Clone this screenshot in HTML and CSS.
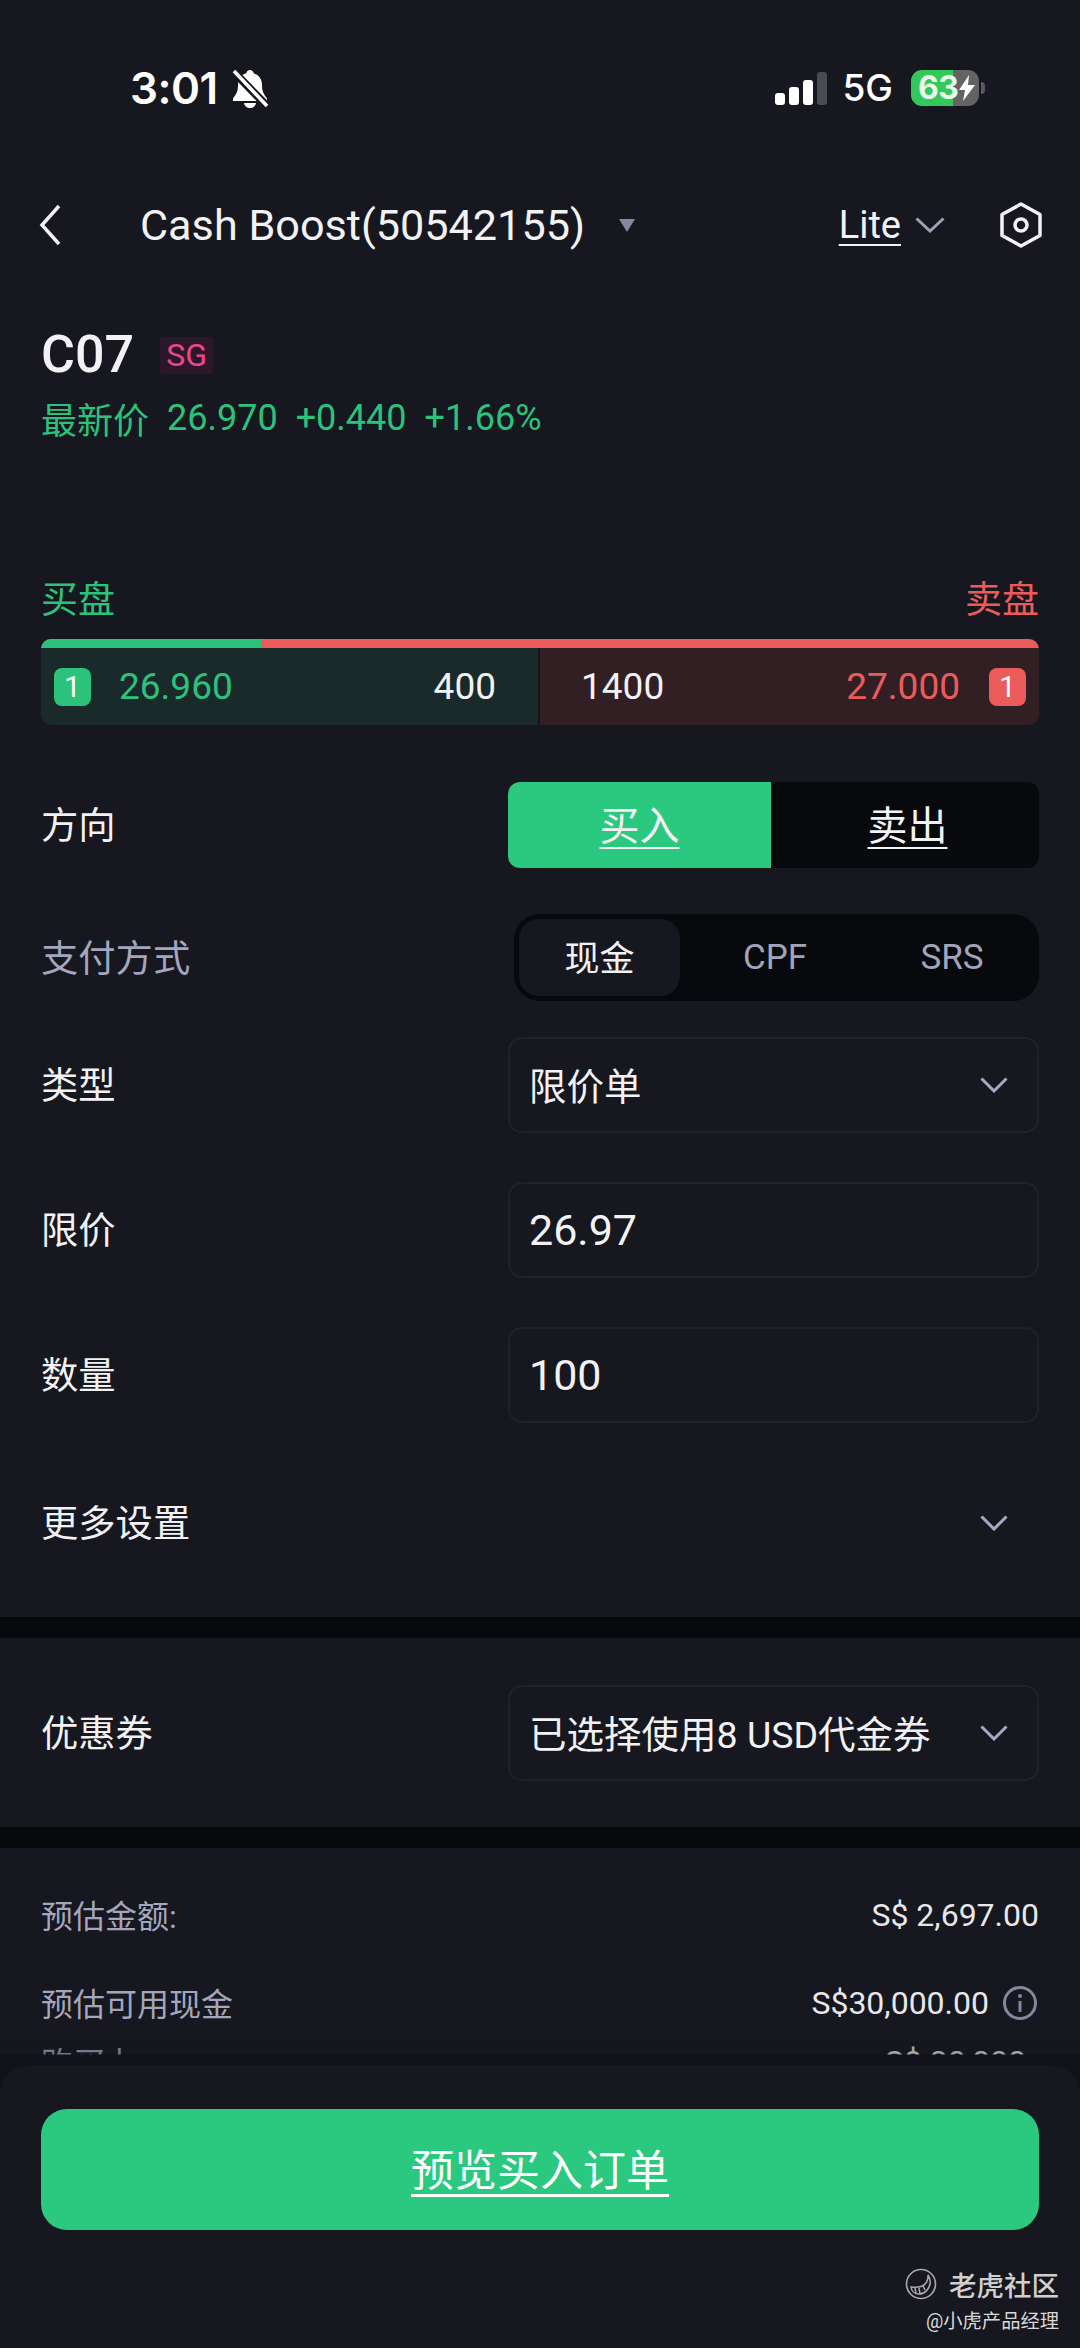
FILE: index.html
```html
<!DOCTYPE html>
<html lang="zh-CN">
<head>
  <meta charset="utf-8">
  <title>Cash Boost</title>
  <link rel="stylesheet" href="styles.css">
</head>
<body>
<div class="page">

  <div class="status">
    <div class="status-left">
      <span class="time">3:01</span>
      <svg class="bell" width="38" height="40" viewBox="0 0 38 40">
        <path d="M19 1c2 0 3.500 1.500 3.700 3.300C28.500 6 31 10.500 31 16c0 6 1.500 9 5 13.500V32H2v-2.500C5.500 25 7 22 7 16c0-5.500 2.500-10 8.300-11.700C15.500 2.500 17 1 19 1z" fill="#fff"/>
        <path d="M13 34h12c-.5 3-3 5-6 5s-5.500-2-6-5z" fill="#fff"/>
        <path d="M1 1l36 37" stroke="#16171f" stroke-width="8"/>
        <path d="M3 2l33 35" stroke="#fff" stroke-width="3.600"/>
      </svg>
    </div>
    <div class="status-right">
      <div class="signal"><i class="b1"></i><i class="b2"></i><i class="b3"></i><i class="b4"></i></div>
      <span class="net">5G</span>
      <div class="battery">
        <span class="batt-num">63</span>
        <svg class="bolt" width="16" height="26" viewBox="0 0 16 26"><path d="M10 0L0 15h6l-2 11L16 10H9z" fill="#fff"/></svg>
      </div>
      <i class="batt-tip"></i>
    </div>
  </div>

  <div class="nav">
    <svg class="back" width="22" height="44" viewBox="0 0 22 44"><path d="M20 3L3 22l17 19" fill="none" stroke="#f2f2f4" stroke-width="3.500"/></svg>
    <span class="nav-title">Cash Boost(50542155)</span>
    <i class="caret"></i>
    <span class="lite">Lite</span>
    <svg class="lite-chev" width="30" height="16" viewBox="0 0 30 16"><path d="M1.500 1.500L15 14 28.500 1.500" fill="none" stroke="#9ea1b8" stroke-width="3"/></svg>
    <svg class="gear" width="44" height="46" viewBox="0 0 44 46">
      <path d="M22 2l19 10.500v21L22 44 3 33.500v-21z" fill="none" stroke="#f2f2f4" stroke-width="3.500" stroke-linejoin="round"/>
      <circle cx="22" cy="23" r="6" fill="none" stroke="#f2f2f4" stroke-width="3.500"/>
    </svg>
  </div>

  <div class="quote">
    <div class="symbol">
      <span class="ticker">C07</span>
      <span class="market">SG</span>
    </div>
    <div class="last">
      <span>最新价</span><span>26.970</span><span>+0.440</span><span>+1.66%</span>
    </div>
  </div>

  <div class="section">
    <div class="depth-head">
      <span class="up">买盘</span>
      <span class="down">卖盘</span>
    </div>
    <div class="depth">
      <div class="depth-ratio"><i></i></div>
      <div class="depth-rows">
        <div class="depth-bid">
          <span class="lvl lvl-up">1</span>
          <span class="up depth-price">26.960</span>
          <span class="depth-qty">400</span>
        </div>
        <div class="depth-ask">
          <span class="depth-qty">1400</span>
          <span class="down depth-price">27.000</span>
          <span class="lvl lvl-down">1</span>
        </div>
      </div>
    </div>

    <div class="row row-dir">
      <span class="label">方向</span>
      <div class="side">
        <span class="side-buy">买入</span>
        <span class="side-sell">卖出</span>
      </div>
    </div>

    <div class="row row-pay">
      <span class="label label-dim">支付方式</span>
      <div class="pay">
        <span class="pay-on">现金</span>
        <span class="pay-cpf">CPF</span>
        <span class="pay-srs">SRS</span>
      </div>
    </div>

    <div class="row row-field row-type">
      <span class="label">类型</span>
      <div class="field">
        <span class="field-text">限价单</span>
        <svg class="chev" width="28" height="16" viewBox="0 0 28 16"><path d="M1.500 1.500L14 14 26.500 1.500" fill="none" stroke="#a5a9c2" stroke-width="3"/></svg>
      </div>
    </div>

    <div class="row row-field">
      <span class="label">限价</span>
      <div class="field"><span class="field-num">26.97</span></div>
    </div>

    <div class="row row-field">
      <span class="label">数量</span>
      <div class="field"><span class="field-num">100</span></div>
    </div>

    <div class="row row-more">
      <span class="label">更多设置</span>
      <svg class="chev" width="28" height="16" viewBox="0 0 28 16"><path d="M1.500 1.500L14 14 26.500 1.500" fill="none" stroke="#a5a9c2" stroke-width="3"/></svg>
    </div>
  </div>

  <div class="gap"></div>

  <div class="section section-coupon">
    <div class="row row-coupon">
      <span class="label">优惠券</span>
      <div class="field">
        <span class="field-text">已选择使用8 USD代金券</span>
        <svg class="chev" width="28" height="16" viewBox="0 0 28 16"><path d="M1.500 1.500L14 14 26.500 1.500" fill="none" stroke="#a5a9c2" stroke-width="3"/></svg>
      </div>
    </div>
  </div>

  <div class="gap"></div>

  <div class="section summary">
    <div class="sum-row">
      <span class="sum-label">预估金额:</span>
      <span class="sum-val">S$ 2,697.00</span>
    </div>
    <div class="sum-row sum-cash">
      <span class="sum-label">预估可用现金</span>
      <span class="sum-val">S$30,000.00
        <svg class="info" width="34" height="34" viewBox="0 0 34 34">
          <circle cx="17" cy="17" r="15.500" fill="none" stroke="#8387a0" stroke-width="3"/>
          <circle cx="17" cy="10" r="2" fill="#8387a0"/>
          <path d="M17 15v11" stroke="#8387a0" stroke-width="3"/>
        </svg>
      </span>
    </div>
    <div class="sum-row sum-power">
      <span class="sum-label">购买力</span>
      <span class="sum-val">S$ 30,000</span>
    </div>
  </div>

  <div class="sheet-fade"></div>
  <div class="sheet">
    <div class="submit"><span>预览买入订单</span></div>
  </div>

  <div class="mark">
    <div class="mark-top">
      <svg width="32" height="32" viewBox="0 0 32 32">
        <circle cx="16" cy="16" r="14.500" fill="none" stroke="#a8a8a8" stroke-width="1.600"/>
        <path d="M23 7c.5 5-2 10-7 11.500-3 .9-6 1-10 .5 .5 4 3.500 7 8 7 6 0 10-5 11-10 .5-3 0-6-2-9z" fill="none" stroke="#a8a8a8" stroke-width="1.600"/>
        <path d="M10 20l1 5M14 20l1 6M18 18l2 4" stroke="#a8a8a8" stroke-width="1.600"/>
      </svg>
      <span>老虎社区</span>
    </div>
    <div class="mark-user">@小虎产品经理</div>
  </div>

</div>
</body>
</html>
```

FILE: styles.css
```css
* { box-sizing: border-box; }

html, body { margin: 0; padding: 0; background: #16171f; }

body {
  font-family: Roboto, "Noto Sans CJK SC", sans-serif;
  color: #f2f2f4;
}

.page {
  position: relative;
  width: 1080px;
  height: 2348px;
  overflow: hidden;
  background: #16171f;
}

/* status bar */
.status { height: 175px; display: flex; justify-content: space-between; padding: 69px 0 0 130px; }
.status-left { display: flex; align-items: flex-start; height: 40px; }
.time { font: 600 44px/38px Inter, sans-serif; color: #fff; letter-spacing: -.5px; }
.bell { margin-left: 13px; }
.status-right { display: flex; align-items: center; height: 38px; padding-right: 95px; }
.signal { display: flex; align-items: flex-end; gap: 4px; height: 33px; margin-right: 15px; }
.signal i { display: block; width: 10px; border-radius: 3px; background: #fff; }
.signal .b1 { height: 12px; }
.signal .b2 { height: 18px; }
.signal .b3 { height: 25px; }
.signal .b4 { height: 33px; background: #4a4b53; }
.net { font: 500 37px/38px Inter, sans-serif; color: #fff; margin-right: 18px; }
.battery {
  position: relative;
  display: flex;
  align-items: center;
  width: 68px;
  height: 36px;
  padding-left: 7px;
  border-radius: 11px;
  background: linear-gradient(90deg, #34c759 0, #34c759 62%, #636366 62%);
}
.batt-num { font: 700 32px/36px Inter, sans-serif; color: #e6f9ea; letter-spacing: -.5px; }
.bolt { margin-left: 1px; }
.batt-tip { display: block; width: 4px; height: 12px; margin-left: 2px; border-radius: 0 4px 4px 0; background: #5a5a60; }

/* top nav */
.nav { height: 100px; display: flex; align-items: center; padding: 0 37px 0 39px; }
.back { flex: none; }
.nav-title { font-size: 43.200px; font-weight: 400; margin-left: 79px; white-space: nowrap; }
.caret {
  width: 0; height: 0; margin-left: 34px;
  border-left: 8px solid transparent;
  border-right: 8px solid transparent;
  border-top: 13px solid #85889f;
}
.lite { font-size: 38px; margin-left: auto; text-decoration: underline; text-underline-offset: 6px; text-decoration-thickness: 2px; }
.lite-chev { margin-left: 14px; }
.gear { margin-left: 54px; }

/* stock quote */
.quote { height: 285px; padding: 56px 41px 0; }
.symbol { display: flex; align-items: center; height: 48px; }
.ticker { font-size: 52px; font-weight: 500; line-height: 48px; }
.market {
  display: flex; align-items: center; justify-content: center;
  width: 53px; height: 37px; margin-left: 26px;
  border-radius: 4px;
  background: #2b1729;
  color: #e8488c;
  font-size: 32px;
}
.last { display: flex; gap: 18px; margin-top: 17px; height: 44px; align-items: center; color: #2bc27c; font-size: 36px; }

.up { color: #2bc27c; }
.down { color: #ec5b5c; }

/* order book strip */
.section { padding: 0 41px; }
.depth-head { display: flex; justify-content: space-between; height: 44px; align-items: center; font-size: 37px; margin-top: 16px; padding-bottom: 3px; }
.depth { margin-top: 19px; height: 86px; border-radius: 10px; overflow: hidden; }
.depth-ratio { height: 9px; background: #ec5b5c; }
.depth-ratio i { display: block; width: 220px; height: 9px; background: #2bc27c; }
.depth-rows { display: flex; height: 77px; font-size: 37px; gap: 2px; background: #13151b; }
.depth-bid, .depth-ask { display: flex; align-items: center; }
.depth-bid { width: 497px; padding: 0 42px 0 13px; background: #1a2a2a; }
.depth-ask { flex: 1; padding: 0 13px 0 41px; background: #321f24; }
.depth-bid .depth-qty { margin-left: auto; }
.depth-ask .depth-price { margin-left: auto; }
.lvl {
  display: flex; align-items: center; justify-content: center;
  width: 37px; height: 38px;
  border-radius: 8px;
  color: #fff;
  font-size: 30px;
}
.lvl-up { background: #2bc27c; margin-right: 28px; }
.lvl-down { background: #ec5b5c; margin-left: 29px; }

/* form rows */
.row { display: flex; align-items: center; justify-content: space-between; }
.label { font-size: 37.300px; white-space: nowrap; padding-bottom: 4px; }
.label-dim { color: #a3a6bd; }

.row-dir { margin-top: 57px; height: 86px; }
.side { display: flex; width: 531px; height: 86px; border-radius: 12px; overflow: hidden; background: #08090c; font-size: 40px; }
.side span { display: flex; align-items: center; justify-content: center; padding-bottom: 4px; text-decoration: underline; text-underline-offset: 7px; text-decoration-thickness: 2px; }
.side-buy { width: 263px; background: #2bc97f; }
.side-sell { flex: 1; padding-left: 5px; }

.row-pay { margin-top: 46px; height: 87px; }
.pay { display: flex; width: 525px; height: 87px; padding: 5px; border-radius: 26px; background: #08090c; color: #a2a5ba; font-size: 35px; }
.pay span { display: flex; align-items: center; justify-content: center; }
.pay .pay-on { width: 161px; padding-bottom: 4px; border-radius: 20px; background: #16171f; color: #f2f2f4; }
.pay .pay-cpf { width: 190px; }
.pay .pay-srs { width: 164px; }

.row-field { margin-top: 49px; height: 96px; }
.row-type { margin-top: 36px; }
.field {
  display: flex; align-items: center; justify-content: space-between;
  width: 531px; height: 96px;
  padding: 0 29px 0 19px;
  border: 2px solid #20212a;
  border-radius: 14px;
}
.field-text { font-size: 37.500px; white-space: nowrap; padding-bottom: 4px; }
.field-num { font-size: 43px; }

.row-more { margin-top: 50px; height: 100px; padding-right: 31px; margin-bottom: 44px; }

.gap { height: 21px; background: #08090c; }

.section-coupon { padding-top: 47px; padding-bottom: 46px; }
.row-coupon { height: 96px; }

/* summary */
.summary { padding-top: 42px; }
.sum-row { display: flex; align-items: center; justify-content: space-between; height: 50px; font-size: 32px; }
.sum-label { color: #a3a6bd; padding-bottom: 3px; }
.sum-val { display: flex; align-items: center; color: #e8e8ec; }
.sum-cash { margin-top: 38px; }
.sum-power { margin-top: 9px; padding-right: 13px; }
.info { margin-left: 14px; margin-right: 2px; }

/* fixed bottom sheet */
.sheet-fade {
  position: absolute;
  left: 0; right: 0; top: 2020px;
  height: 80px;
  background: linear-gradient(#12131a00 0, #12131a55 34px, #12131a 35px);
}
.sheet {
  position: absolute;
  left: 0; right: 0; bottom: 0;
  height: 283px;
  padding: 44px 41px 0;
  border-radius: 30px 30px 0 0;
  background: #16171f;
}
.submit {
  display: flex; align-items: center; justify-content: center;
  height: 121px;
  padding-bottom: 6px;
  border-radius: 26px;
  background: #2bc97f;
  color: #fff;
  font-size: 43px;
}
.submit span { text-decoration: underline; text-underline-offset: 8px; text-decoration-thickness: 3px; }

/* watermark */
.mark { position: absolute; right: 21px; top: 2267px; display: flex; flex-direction: column; align-items: flex-end; }
.mark-top { display: flex; align-items: center; gap: 12px; height: 34px; color: #cfcfcf; font-size: 27.500px; font-weight: 500; }
.mark-user { margin-top: 6px; color: #d8d8d8; font-size: 19.300px; line-height: 30px; }
```
